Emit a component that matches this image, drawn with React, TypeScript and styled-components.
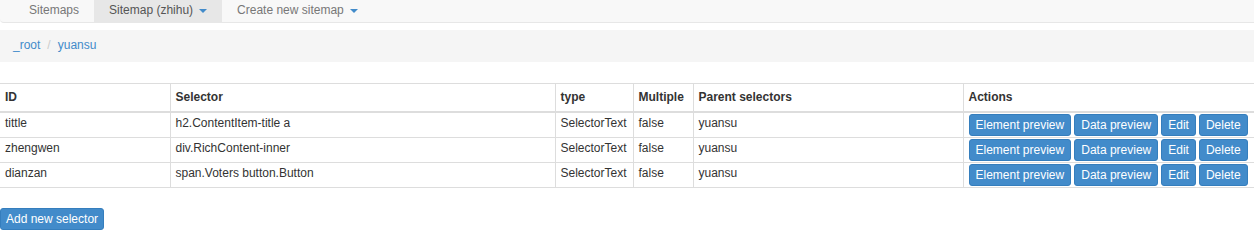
import React from 'react';
import styled, { createGlobalStyle } from 'styled-components';

const GlobalStyle = createGlobalStyle`
  body {
    margin: 0;
    font-family: "Liberation Sans", Arial, sans-serif;
    font-size: 12px;
    line-height: 17px;
    color: #333;
    background: #fff;
  }
`;

const selectors = [
  { id: 'tittle', selector: 'h2.ContentItem-title a' },
  { id: 'zhengwen', selector: 'div.RichContent-inner' },
  { id: 'dianzan', selector: 'span.Voters button.Button' },
];

function App() {
  return (
    <>
      <GlobalStyle />
      <Navbar>
        <NavList>
          <NavItem>Sitemaps</NavItem>
          <NavItem active>
            Sitemap (zhihu)
            <Caret />
          </NavItem>
          <NavItem>
            Create new sitemap
            <Caret />
          </NavItem>
        </NavList>
      </Navbar>
      <Breadcrumb>
        <Crumb>_root</Crumb>
        <Separator>/</Separator>
        <Crumb>yuansu</Crumb>
      </Breadcrumb>
      <Table>
        <colgroup>
          <col style={{ width: 170 }} />
          <col style={{ width: 385 }} />
          <col style={{ width: 78 }} />
          <col style={{ width: 60 }} />
          <col style={{ width: 270 }} />
          <col />
        </colgroup>
        <thead>
          <tr>
            <Th>ID</Th>
            <Th>Selector</Th>
            <Th>type</Th>
            <Th>Multiple</Th>
            <Th>Parent selectors</Th>
            <Th>Actions</Th>
          </tr>
        </thead>
        <tbody>
          {selectors.map((row) => (
            <tr key={row.id}>
              <Td>{row.id}</Td>
              <Td>{row.selector}</Td>
              <Td>SelectorText</Td>
              <Td>false</Td>
              <Td>yuansu</Td>
              <Td>
                <Actions>
                  <Button>Element preview</Button>
                  <Button>Data preview</Button>
                  <Button>Edit</Button>
                  <Button>Delete</Button>
                </Actions>
              </Td>
            </tr>
          ))}
        </tbody>
      </Table>
      <Footer>
        <Button narrow>Add new selector</Button>
      </Footer>
    </>
  );
}

export default App;

const Navbar = styled.nav`
  height: 22px;
  background: #f8f8f8;
  border-bottom: 1px solid #e7e7e7;
  border-radius: 0 0 0 4px;
`;

const NavList = styled.ul`
  display: flex;
  margin: 0 0 0 14px;
  padding: 0;
  list-style: none;
`;

const NavItem = styled.li<{ active?: boolean }>`
  display: flex;
  align-items: center;
  height: 22px;
  padding: 0 15px 2px;
  box-sizing: border-box;
  color: ${({ active }) => (active ? '#555' : '#777')};
  background: ${({ active }) => (active ? '#e7e7e7' : 'transparent')};
`;

const Caret = styled.span`
  display: inline-block;
  width: 0;
  height: 0;
  margin-left: 6px;
  margin-top: 2px;
  border-top: 4px solid #428bca;
  border-left: 4px solid transparent;
  border-right: 4px solid transparent;
`;

const Breadcrumb = styled.div`
  margin-top: 7px;
  padding: 7px 13px 8px;
  background: #f5f5f5;
`;

const Crumb = styled.a`
  color: #428bca;
`;

const Separator = styled.span`
  padding: 0 7px;
  color: #ccc;
`;

const Table = styled.table`
  width: 100%;
  margin-top: 21px;
  border-collapse: collapse;
  table-layout: fixed;
`;

const Th = styled.th`
  padding: 5px 5px 5px;
  text-align: left;
  font-weight: bold;
  vertical-align: bottom;
  border-top: 1px solid #ddd;
  border-bottom: 2px solid #ddd;
  & + & {
    border-left: 1px solid #ddd;
  }
`;

const Td = styled.td`
  padding: 2px 5px 0;
  height: 22px;
  vertical-align: top;
  white-space: nowrap;
  border-bottom: 1px solid #ddd;
  & + & {
    border-left: 1px solid #ddd;
  }
`;

const Actions = styled.div`
  display: flex;
  gap: 3px;
  margin-top: -1px;
`;

const Button = styled.button<{ narrow?: boolean }>`
  padding: 1px ${({ narrow }) => (narrow ? '5px' : '6px')};
  font-family: inherit;
  font-size: 12px;
  line-height: 18px;
  color: #fff;
  background: #428bca;
  border: 1px solid #357ebd;
  border-radius: 3px;
  white-space: nowrap;
`;

const Footer = styled.div`
  margin-top: 20px;
`;
